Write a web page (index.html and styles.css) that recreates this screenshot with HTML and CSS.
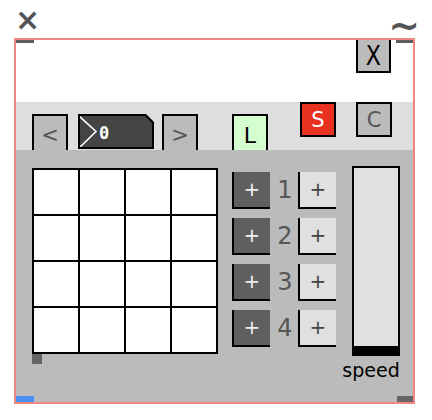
FILE: index.html
```html
<!DOCTYPE html>
<html>
<head>
<meta charset="utf-8">
<link rel="stylesheet" href="styles.css">
</head>
<body>
<div class="top">
  <span class="close">×</span>
  <span class="tilde">~</span>
</div>
<div class="frame">
  <span class="mark mark-tl"></span>
  <span class="mark mark-tr"></span>
  <span class="mark mark-bl"></span>
  <span class="mark mark-br"></span>
  <div class="head">
    <div class="btn-x"><span class="x-glyph">X</span></div>
  </div>
  <div class="band">
    <div class="tab tab-prev">&lt;</div>
    <div class="display">
      <div class="display-inner">
        <svg class="chev" width="22" height="33" viewBox="0 0 22 33"><polyline points="0,0 18,16.5 1,33" fill="none" stroke="#fff" stroke-width="1.6"/></svg>
        <span class="num">0</span>
      </div>
    </div>
    <div class="tab tab-next">&gt;</div>
    <div class="tab tab-l">L</div>
    <div class="box box-s">S</div>
    <div class="box box-c">C</div>
  </div>
  <div class="body">
    <div class="grid-col">
      <div class="grid">
        <i></i><i></i><i></i><i></i>
        <i></i><i></i><i></i><i></i>
        <i></i><i></i><i></i><i></i>
        <i></i><i></i><i></i><i></i>
      </div>
      <div class="grid-handle"></div>
    </div>
    <div class="rows">
      <div class="row"><div class="pb dark">+</div><span class="n">1</span><div class="pb light">+</div></div>
      <div class="row"><div class="pb dark">+</div><span class="n">2</span><div class="pb light">+</div></div>
      <div class="row"><div class="pb dark">+</div><span class="n">3</span><div class="pb light">+</div></div>
      <div class="row"><div class="pb dark">+</div><span class="n">4</span><div class="pb light">+</div></div>
    </div>
    <div class="slider-col">
      <div class="slider"></div>
      <div class="label">speed</div>
    </div>
  </div>
</div>
</body>
</html>
```
FILE: styles.css
```css
* { box-sizing: border-box; }
html, body { margin: 0; padding: 0; background: #fff; }
body {
  width: 432px;
  height: 420px;
  font-family: "DejaVu Sans", sans-serif;
  overflow: hidden;
}
.top {
  height: 38px;
  display: flex;
  justify-content: space-between;
  align-items: flex-start;
  padding: 0 12px 0 15px;
  color: #555;
}
.close {
  font-size: 30px;
  line-height: 34px;
  margin-top: 3px;
  font-weight: bold;
}
.tilde {
  font-size: 38px;
  line-height: 34px;
  margin-top: 8px;
  font-weight: bold;
}
.frame {
  position: relative;
  margin-left: 14px;
  width: 401px;
  height: 366px;
  border: 2px solid #ef8884;
  display: flex;
  flex-direction: column;
}
.mark {
  position: absolute;
  width: 18px;
  background: #5e5e5e;
}
.mark-tl { left: 0; top: 0; height: 3px; }
.mark-tr { right: 0; top: 0; height: 3px; width: 17px; }
.mark-bl { left: 0; bottom: 0; height: 6px; background: #4a8ff2; }
.mark-br { right: 0; bottom: 0; height: 6px; width: 16px; background: #666; }

.head {
  height: 62px;
  background: #fff;
  display: flex;
  justify-content: flex-end;
  padding-right: 22px;
}
.btn-x {
  width: 35px;
  height: 33px;
  background: #bbb;
  border: 2px solid #000;
  border-top: none;
  font-size: 27px;
  line-height: 32px;
  text-align: center;
  color: #000;
}
.x-glyph {
  display: inline-block;
  transform: scaleX(0.82);
  font-weight: normal;
}
.band {
  height: 48px;
  background: #dedede;
  display: flex;
  align-items: flex-end;
  padding-left: 16px;
}
.tab {
  width: 36px;
  height: 36px;
  border: 2px solid #000;
  border-bottom: none;
  background: #bbb;
  color: #555;
  font-size: 21px;
  line-height: 38px;
  text-align: center;
}
.tab-prev { margin-right: 10px; }
.tab-next { margin-left: 8px; }
.tab-l {
  margin-left: 34px;
  background: #d4fdd0;
  color: #000;
  font-size: 22px;
  line-height: 40px;
}
.display {
  width: 76px;
  height: 35px;
  margin-bottom: 1px;
  background: #000;
  padding: 2px;
  clip-path: polygon(0 0, calc(100% - 8px) 0, 100% 8px, 100% 100%, 0 100%);
}
.display-inner {
  width: 100%;
  height: 100%;
  background: #444;
  display: flex;
  align-items: center;
  clip-path: polygon(0 0, calc(100% - 7px) 0, 100% 7px, 100% 100%, 0 100%);
}
.chev { margin-left: -2px; flex: none; }
.num {
  font-family: "DejaVu Sans Mono", monospace;
  font-weight: bold;
  font-size: 17px;
  color: #fff;
  margin-left: -1px;
  margin-top: 3px;
}
.box {
  align-self: flex-start;
  width: 36px;
  height: 35px;
  border: 2px solid #000;
  font-size: 21px;
  line-height: 32px;
  text-align: center;
}
.box-s { margin-left: 32px; background: #e8321f; color: #fff; }
.box-c { margin-left: 20px; background: #bbb; color: #555; }

.body {
  flex: 1;
  background: #bbb;
  display: flex;
  align-items: flex-start;
  padding: 16px 0 0 16px;
}
.grid-col { margin-top: 2px; }
.grid {
  width: 186px;
  height: 186px;
  background: #000;
  padding: 2px;
  display: grid;
  grid-template-columns: repeat(4, 1fr);
  grid-template-rows: repeat(4, 1fr);
  gap: 2px;
}
.grid i { background: #fff; }
.grid-handle {
  width: 10px;
  height: 10px;
  background: #666;
}
.rows {
  margin-left: 14px;
  margin-top: 6px;
  display: flex;
  flex-direction: column;
  gap: 9px;
}
.row {
  display: flex;
  align-items: center;
  height: 37px;
}
.pb {
  width: 38px;
  height: 37px;
  border-left: 2px solid #000;
  border-bottom: 2px solid #000;
  font-size: 20px;
  line-height: 34px;
  text-align: center;
}
.pb.dark { background: #5f5f5f; color: #eee; }
.pb.light { background: #e0e0e0; color: #444; }
.n {
  width: 28px;
  text-align: center;
  font-size: 24px;
  color: #555;
  line-height: 37px;
  padding-left: 2px;
}
.slider-col {
  margin-left: 16px;
  display: flex;
  flex-direction: column;
  align-items: center;
  width: 48px;
}
.slider {
  width: 48px;
  height: 190px;
  border: 2px solid #000;
  border-bottom: 10px solid #000;
  background: #e0e0e0;
}
.label {
  font-size: 19px;
  line-height: 22px;
  margin-top: 3px;
  color: #000;
  margin-left: -10px;
}
```
